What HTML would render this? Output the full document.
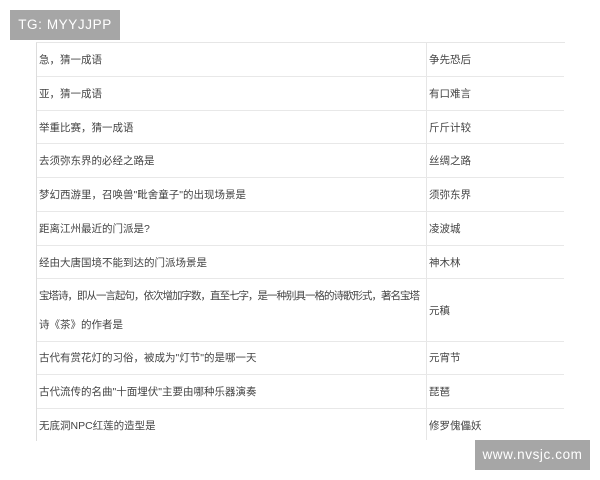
<!DOCTYPE html>
<html><head><meta charset="utf-8"><style>
*{margin:0;padding:0}
body{width:600px;height:480px;background:#fff;position:relative;overflow:hidden;font-family:"Liberation Sans","Noto Sans CJK SC",sans-serif;color:#444;font-size:10.5px}
.t{position:absolute;left:36px;top:42px;width:528px;height:398px;border-left:1px solid #ddd;border-top:1px solid #e6e6e6}
.v{position:absolute;left:426px;top:42px;width:1px;height:398px;background:#e6e6e6}
.h{position:absolute;left:37px;width:527px;height:1px;background:#e8e8e8}
.q{position:absolute;left:39px;white-space:nowrap;line-height:14px}
.a{position:absolute;left:429px;white-space:nowrap;line-height:14px}
.lab{position:absolute;background:#a6a6a6;color:#fff;font-size:13.5px;letter-spacing:0.6px}
</style></head><body>
<div class="t"></div><div class="v"></div>
<div class="h" style="top:76px"></div><div class="h" style="top:110px"></div><div class="h" style="top:143px"></div><div class="h" style="top:177px"></div><div class="h" style="top:211px"></div><div class="h" style="top:245px"></div><div class="h" style="top:278px"></div><div class="h" style="top:341px"></div><div class="h" style="top:374px"></div><div class="h" style="top:408px"></div>
<div class="q" style="top:53px">急，猜一成语</div><div class="a" style="top:53px">争先恐后</div>
<div class="q" style="top:87px">亚，猜一成语</div><div class="a" style="top:87px">有口难言</div>
<div class="q" style="top:121px">举重比赛，猜一成语</div><div class="a" style="top:121px">斤斤计较</div>
<div class="q" style="top:154px">去须弥东界的必经之路是</div><div class="a" style="top:154px">丝绸之路</div>
<div class="q" style="top:188px">梦幻西游里，召唤兽"毗舍童子"的出现场景是</div><div class="a" style="top:188px">须弥东界</div>
<div class="q" style="top:222px">距离江州最近的门派是?</div><div class="a" style="top:222px">凌波城</div>
<div class="q" style="top:256px">经由大唐国境不能到达的门派场景是</div><div class="a" style="top:256px">神木林</div>
<div class="q" style="top:289px;letter-spacing:-1px">宝塔诗，即从一言起句，依次增加字数，直至七字，是一种别具一格的诗歌形式，著名宝塔</div>
<div class="q" style="top:318px">诗《茶》的作者是</div><div class="a" style="top:304px">元稹</div>
<div class="q" style="top:351px">古代有赏花灯的习俗，被成为"灯节"的是哪一天</div><div class="a" style="top:351px">元宵节</div>
<div class="q" style="top:385px">古代流传的名曲"十面埋伏"主要由哪种乐器演奏</div><div class="a" style="top:385px">琵琶</div>
<div class="q" style="top:419px">无底洞NPC红莲的造型是</div><div class="a" style="top:419px">修罗傀儡妖</div>
<div class="lab" style="left:10px;top:10px;width:110px;height:30px;line-height:30px;text-align:center">TG: MYYJJPP</div>
<div class="lab" style="left:475px;top:440px;width:115px;height:30px;line-height:30px;text-align:center">www.nvsjc.com</div>
</body></html>
